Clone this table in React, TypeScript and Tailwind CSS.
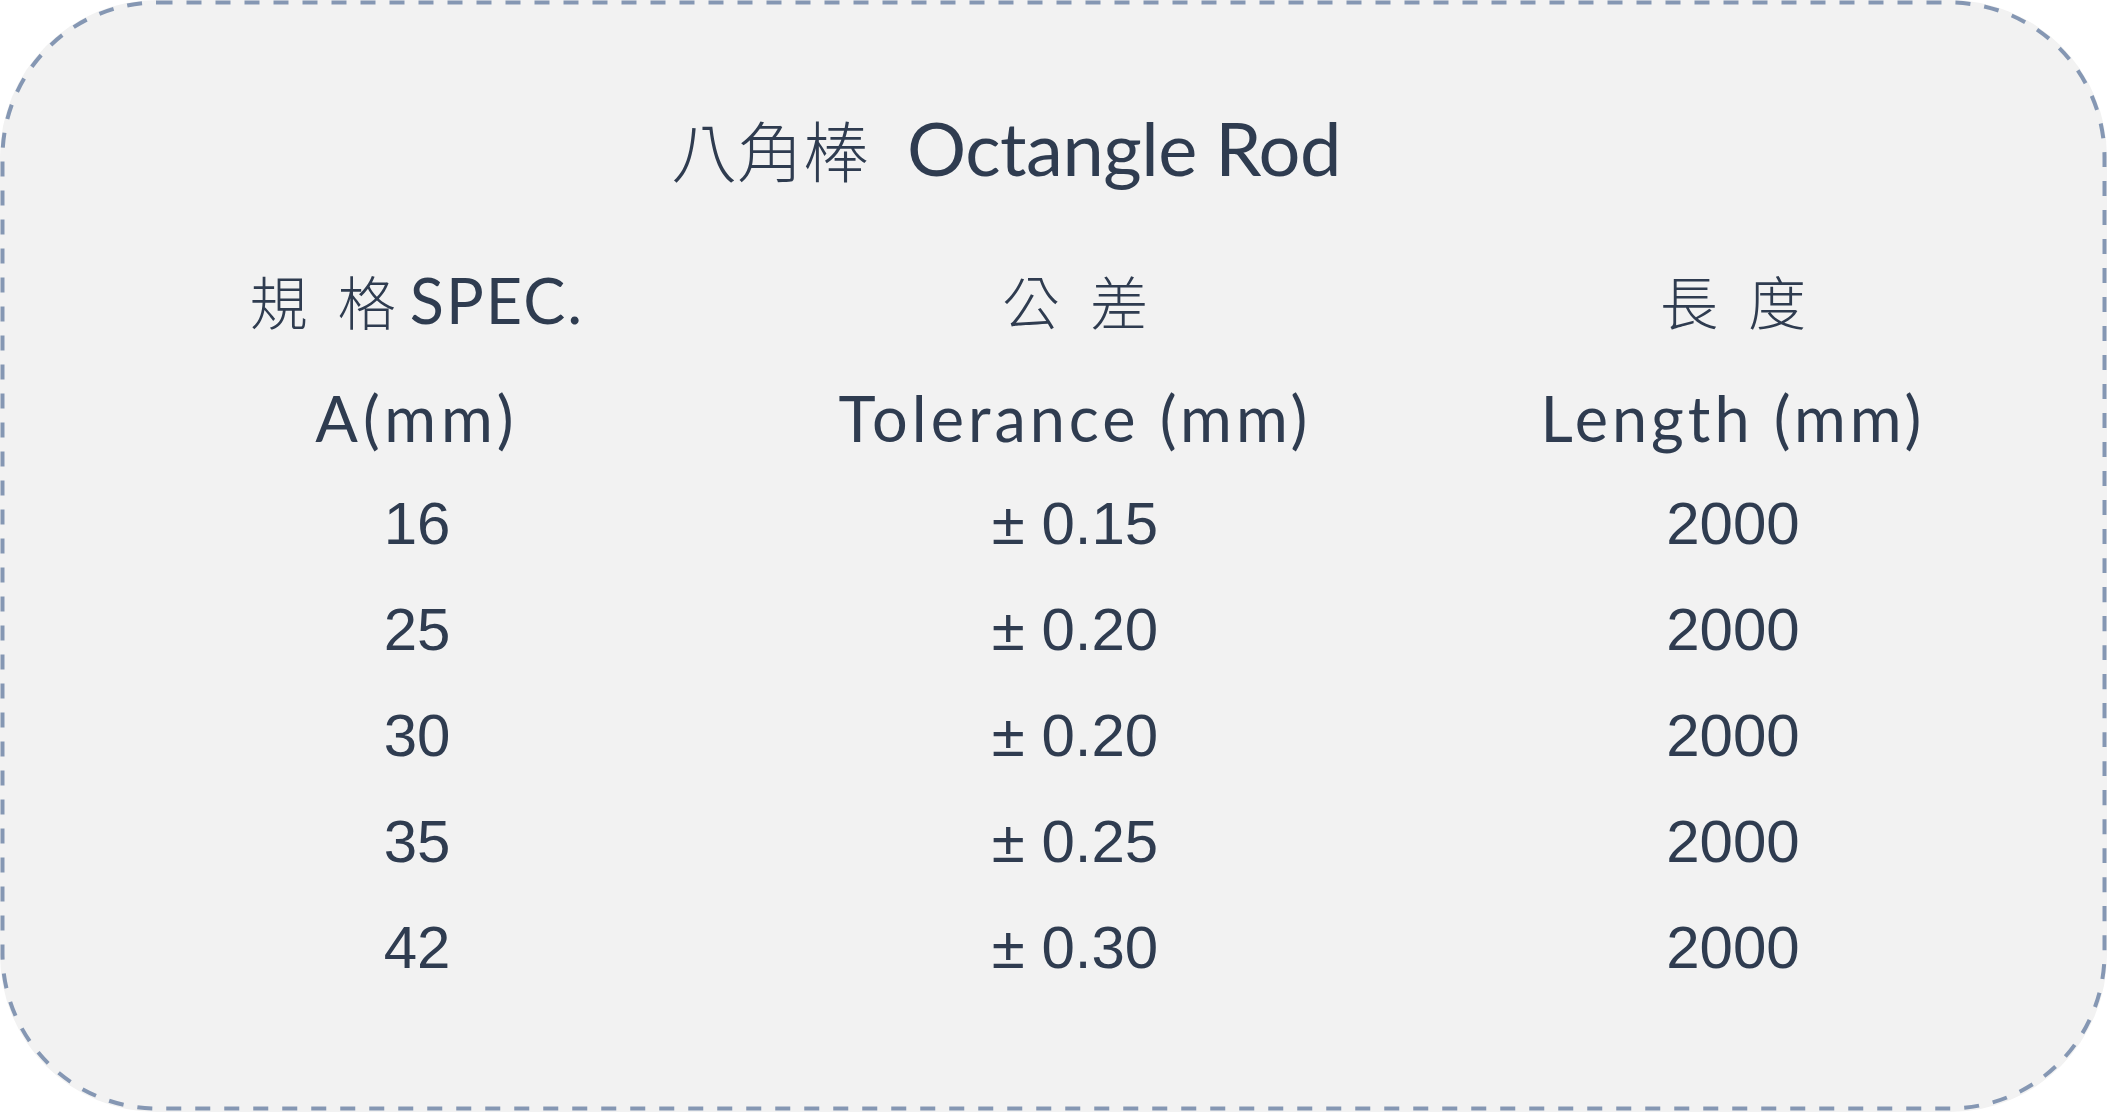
import React from "react";

const rows: [string, string, string][] = [
  ["16", "± 0.15", "2000"],
  ["25", "± 0.20", "2000"],
  ["30", "± 0.20", "2000"],
  ["35", "± 0.25", "2000"],
  ["42", "± 0.30", "2000"],
];

const latin = "font-['Lato','Open_Sans',sans-serif]";
const cjk = "font-['Noto_Sans_CJK_TC','Noto_Sans_CJK_JP',sans-serif]";
const num = "font-['Liberation_Sans',Arial,sans-serif]";

export default function App() {
  return (
    <div className="w-[2107px] h-[1112px] bg-white">
      <div className="relative w-[2107px] h-[1112px] box-border rounded-[157px] bg-[#f2f2f2] text-[#2f3c50] pt-[98px]">
        <svg
          className="absolute inset-0 pointer-events-none"
          width="2107"
          height="1112"
          viewBox="0 0 2107 1112"
        >
          <rect
            x="2.5"
            y="2.5"
            width="2102"
            height="1106"
            rx="155"
            ry="155"
            fill="none"
            stroke="#8597b3"
            strokeWidth="4"
            strokeDasharray="15 14"
          />
        </svg>
        <div className="h-[100px] leading-[100px] pl-[671px] flex items-center whitespace-pre">
          <span className={`${cjk} text-[66px] font-light`}>八角棒</span>
          <span className={`${latin} text-[74px] tracking-[-0.5px] ml-[38px]`}>Octangle Rod</span>
        </div>
        <div className="mt-[49px] ml-[88px] grid grid-cols-[658px_658px_658px]">
          <div className="h-[106px] flex items-center justify-center whitespace-pre">
            <span className={`${cjk} text-[58px] font-light`}>規</span>
            <span className={`${cjk} text-[58px] font-light ml-[30px]`}>格</span>
            <span className={`${latin} text-[63px] tracking-[2px] ml-[14px]`}>SPEC.</span>
          </div>
          <div className="h-[106px] flex items-center justify-center">
            <span className={`${cjk} text-[58px] font-light`}>公</span>
            <span className={`${cjk} text-[58px] font-light ml-[30px]`}>差</span>
          </div>
          <div className="h-[106px] flex items-center justify-center">
            <span className={`${cjk} text-[58px] font-light`}>長</span>
            <span className={`${cjk} text-[58px] font-light ml-[30px]`}>度</span>
          </div>

          <div className={`mt-[12px] h-[106px] flex items-center justify-center ${latin} text-[63px] tracking-[5px]`}>A(mm)</div>
          <div className={`mt-[12px] h-[106px] flex items-center justify-center ${latin} text-[63px] tracking-[4px] whitespace-pre`}>Tolerance (mm)</div>
          <div className={`mt-[12px] h-[106px] flex items-center justify-center ${latin} text-[63px] tracking-[4px] whitespace-pre`}>Length (mm)</div>

          {rows.map((r, i) => (
            <React.Fragment key={i}>
              <div className={`h-[106px] flex items-center justify-center ${num} text-[60px]`}>{r[0]}</div>
              <div className={`h-[106px] flex items-center justify-center ${num} text-[60px] whitespace-pre`}>{r[1]}</div>
              <div className={`h-[106px] flex items-center justify-center ${num} text-[60px]`}>{r[2]}</div>
            </React.Fragment>
          ))}
        </div>
      </div>
    </div>
  );
}
